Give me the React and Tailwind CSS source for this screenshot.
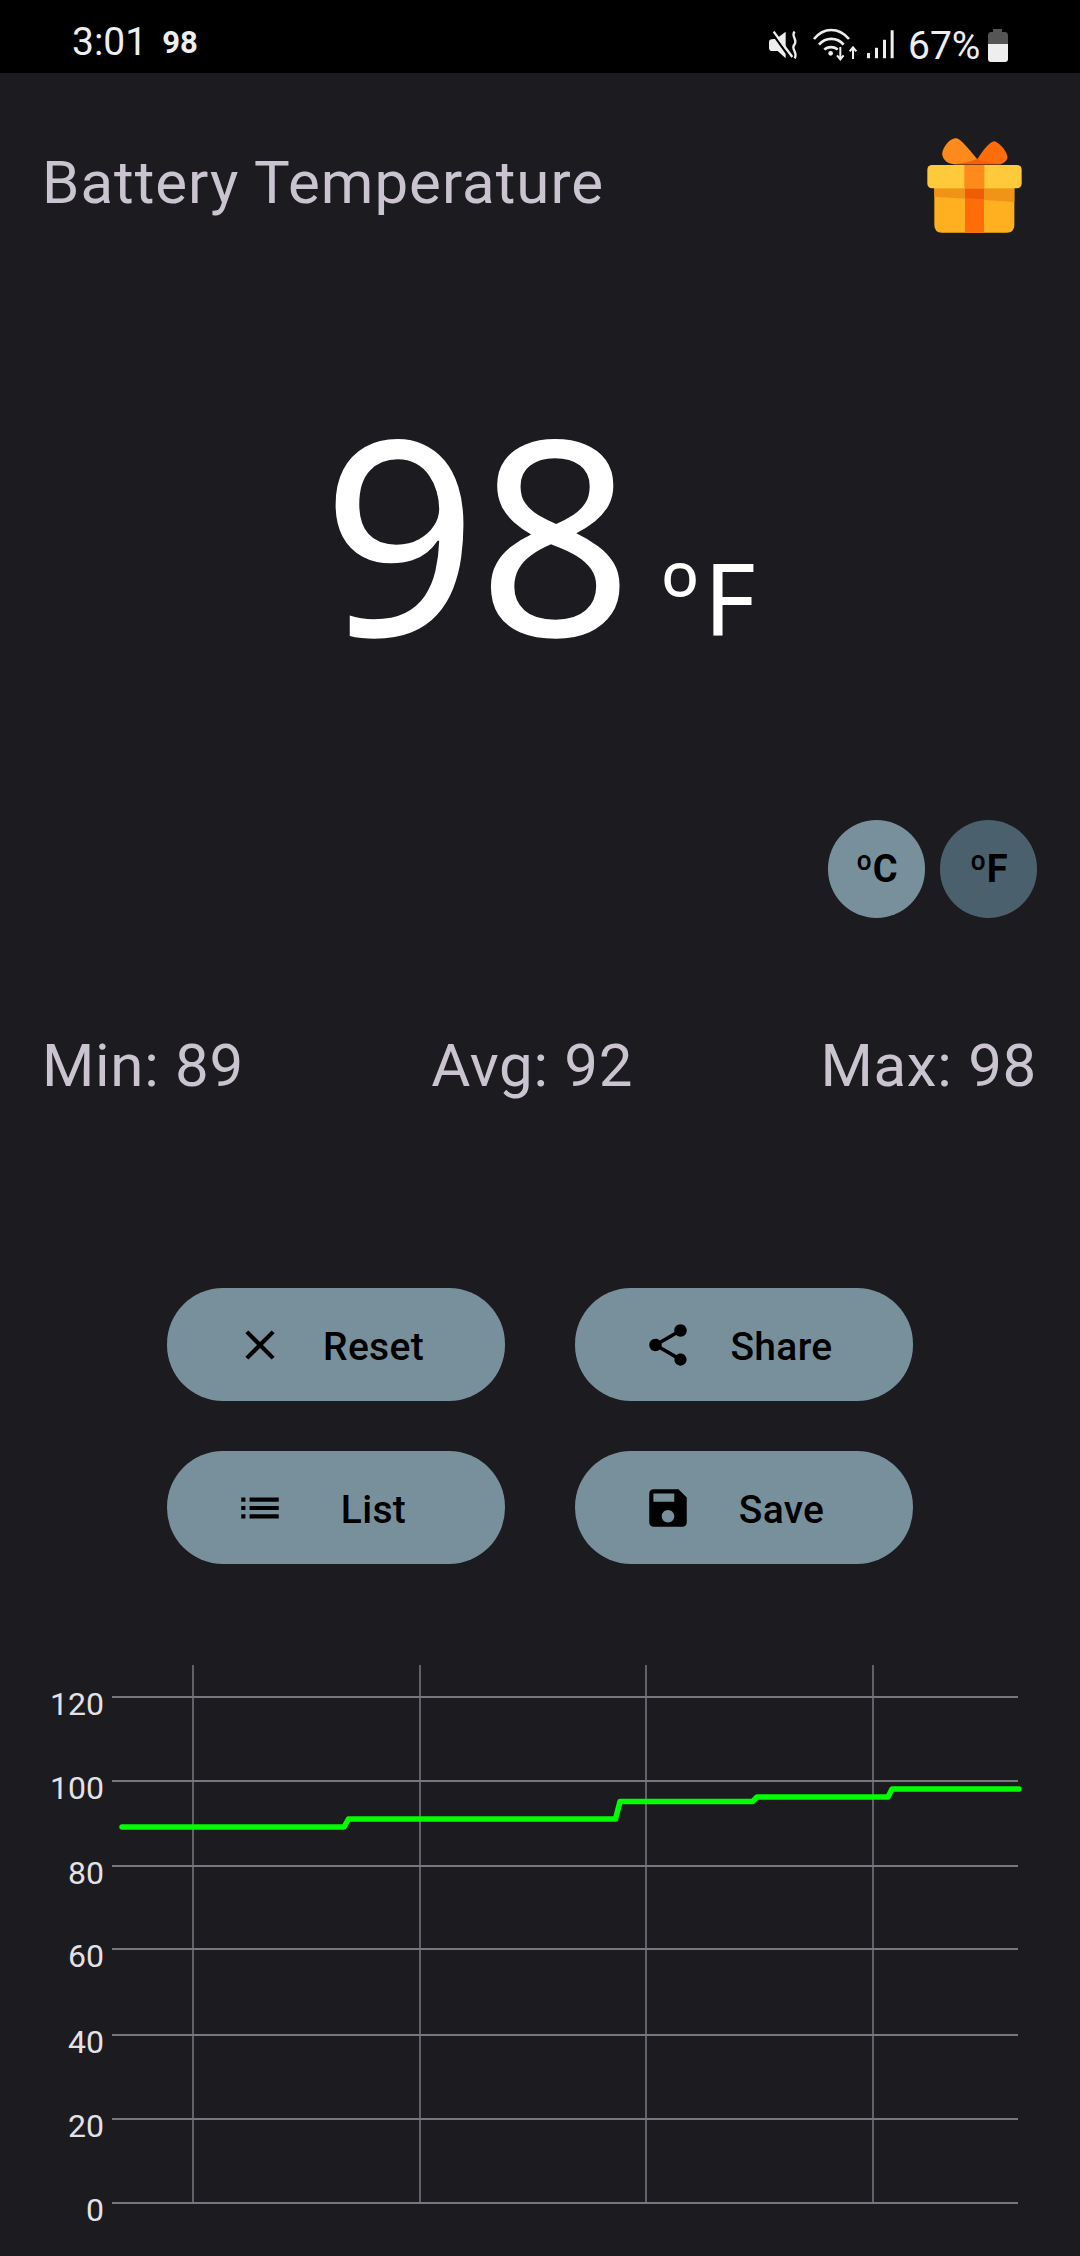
const roboto = "font-['Roboto',sans-serif]";

function SystemIcons() {
  return (
    <svg width="128.33" height="33.33" viewBox="80 55 385 100" className="absolute left-[766.7px] top-[28.3px]">
      {/* muted speaker */}
      <path d="M86 96 Q86 90 93 89 L108 87 L136 66 V146 L112 124 H96 Q86 124 86 114Z" fill="#eeeeee" />
      <path d="M92 66 L150 146" stroke="#000" strokeWidth="7" />
      <path d="M100 66 L156 142" stroke="#eeeeee" strokeWidth="7" />
      <path d="M163 66 C150 80 174 90 162 105 C150 118 174 128 163 146" stroke="#eeeeee" strokeWidth="7" fill="none" />
      {/* wifi */}
      <g stroke="#eeeeee" strokeWidth="8" fill="none">
        <path d="M221 88 C250 52 295 52 326 88" />
        <path d="M236 105 C256 82 290 82 310 105" />
        <path d="M252 120 C262 110 282 110 292 120" />
        <path d="M300 112 V148 M290 137 L300 149 L310 137" strokeWidth="6" />
        <path d="M338 148 V114 M328 125 L338 113 L348 125" strokeWidth="6" />
      </g>
      <circle cx="271" cy="131" r="7" fill="#eeeeee" />
      {/* signal */}
      <rect x="380" y="130" width="9" height="16" rx="1" fill="#eeeeee" />
      <rect x="404" y="114" width="9" height="32" rx="1" fill="#eeeeee" />
      <rect x="428" y="90" width="9" height="56" rx="1" fill="#eeeeee" />
      <rect x="451" y="62" width="9" height="84" rx="1" fill="#eeeeee" />
    </svg>
  );
}

function StatusBar() {
  return (
    <div className={`relative h-[73px] bg-black text-[#eeeeee] flex items-center pt-[12px] ${roboto}`}>
      <span className="ml-[72px] text-[39px] leading-none">3:01</span>
      <span className="ml-[15px] text-[31px] font-bold leading-none">98</span>
      <SystemIcons />
      <span className="absolute left-[908px] top-[27px] text-[39px] leading-none">67%</span>
      <svg width="22" height="33" viewBox="0 0 22 33" className="absolute left-[987px] top-[28.5px]">
        <path d="M6 0 H15 V3 H18 Q21 3 21 7 V15 H1 V7 Q1 3 4 3 H6Z" fill="#555555" />
        <path d="M1 15 H21 V30 Q21 33 18 33 H4 Q1 33 1 30Z" fill="#eeeeee" />
      </svg>
    </div>
  );
}

function GiftIcon() {
  return (
    <svg width="140" height="120" viewBox="0 0 420 360">
      <path d="M232 118 C200 80 185 60 170 55 C150 52 125 85 127 105 C130 122 145 132 165 133 L232 133Z" fill="#ff8a1c" />
      <path d="M232 118 C250 90 268 65 283 64 C300 68 325 100 322 115 C318 128 305 133 295 133 L232 133Z" fill="#ff6d0a" />
      <path d="M155 133 C185 130 215 125 232 116 C250 125 280 130 305 133Z" fill="#f55f0c" />
      <path d="M103 190 H343 V315 Q343 338 320 338 H126 Q103 338 103 315Z" fill="#ffb020" />
      <path d="M103 205 H343 V246 L103 230Z" fill="#f09418" />
      <rect x="195" y="190" width="57" height="148" fill="#ff6d0a" />
      <path d="M195 205 H252 V238 L195 234Z" fill="#ef5c06" />
      <rect x="82" y="135" width="283" height="70" rx="14" fill="#ffc93c" />
      <rect x="193" y="135" width="60" height="70" fill="#ff8a1c" />
    </svg>
  );
}

function Icon({ d }) {
  return (
    <svg width="50" height="50" viewBox="0 0 24 24" fill="#000" className="shrink-0">
      <path d={d} />
    </svg>
  );
}

function ActionButton({ d, label }) {
  return (
    <button className="w-[338px] h-[113px] rounded-[56px] bg-[#78909c] flex items-center pl-[68px] text-black">
      <Icon d={d} />
      <span className={`w-[177px] pt-[5px] text-center text-[39px] leading-none font-medium tracking-[0.3px] ${roboto}`}>{label}</span>
    </button>
  );
}

const CLOSE = "M19 6.41L17.59 5 12 10.59 6.41 5 5 6.41 10.59 12 5 17.59 6.41 19 12 13.41 17.59 19 19 17.59 13.41 12z";
const SHARE = "M18 16.08c-.76 0-1.44.3-1.96.77L8.91 12.7c.05-.23.09-.46.09-.7s-.04-.47-.09-.7l7.05-4.11c.54.5 1.25.81 2.04.81 1.66 0 3-1.34 3-3s-1.34-3-3-3-3 1.34-3 3c0 .24.04.47.09.7L8.04 9.81C7.5 9.31 6.79 9 6 9c-1.66 0-3 1.34-3 3s1.34 3 3 3c.79 0 1.5-.31 2.04-.81l7.12 4.16c-.05.21-.08.43-.08.65 0 1.61 1.31 2.92 2.92 2.92s2.92-1.31 2.92-2.92-1.31-2.92-2.92-2.92z";
const LIST = "M3 13h2v-2H3v2zm0 4h2v-2H3v2zm0-8h2V7H3v2zm4 4h14v-2H7v2zm0 4h14v-2H7v2zM7 7v2h14V7H7z";
const SAVE = "M17 3H5c-1.11 0-2 .9-2 2v14c0 1.1.89 2 2 2h14c1.1 0 2-.9 2-2V7l-4-4zm-5 16c-1.66 0-3-1.34-3-3s1.34-3 3-3 3 1.34 3 3-1.34 3-3 3zm3-10H5V5h10v4z";

const yTicks = [
  { label: "120", y: 47 },
  { label: "100", y: 131 },
  { label: "80", y: 216 },
  { label: "60", y: 299 },
  { label: "40", y: 385 },
  { label: "20", y: 469 },
  { label: "0", y: 553 },
];
const xTicks = [193, 420, 646, 873];
const linePoints = "122,177 344,177 348.5,169 615.5,169 620,151.5 752.5,151.5 757,147 888,147 892,139 1019,139";

function Chart() {
  return (
    <svg width="1080" height="606" viewBox="0 0 1080 606" className="block">
      {xTicks.map((x) => (
        <line key={x} x1={x} x2={x} y1="15" y2="553" stroke="#7b7a80" strokeWidth="1.5" />
      ))}
      {yTicks.map((t) => (
        <g key={t.label}>
          <line x1="112" x2="1018" y1={t.y} y2={t.y} stroke="#79777e" strokeWidth="2" />
          <text x="104" y={t.y + 18} textAnchor="end" fill="#e6e1e5" fontSize="32" fontFamily="Roboto, sans-serif">
            {t.label}
          </text>
        </g>
      ))}
      <polyline points={linePoints} fill="none" stroke="#00ff00" strokeWidth="5.5" strokeLinecap="round" strokeLinejoin="round" />
    </svg>
  );
}

export default function App() {
  return (
    <div className="w-[1080px] h-[2256px] overflow-hidden bg-[#1c1b1f]">
      <StatusBar />

      <div className="mt-[47px] h-[120px] flex items-center justify-between pl-[42px] pr-[40px]">
        <h1 className={`pt-[5px] text-[60px] leading-[70px] font-normal tracking-[1px] text-[#cac4d0] ${roboto}`}>Battery Temperature</h1>
        <GiftIcon />
      </div>

      <div className="mt-[147px] pl-[322px] flex items-baseline text-white h-[285px] font-['Noto_Sans',sans-serif]">
        <span className="text-[272px] leading-[288px]">98</span>
        <span className="ml-[28px] text-[100px] leading-none tracking-[5px]">ºF</span>
      </div>

      <div className={`mt-[148px] flex justify-end gap-[15px] pr-[43px] text-black text-[38px] font-bold ${roboto}`}>
        <div className="w-[97px] h-[98px] rounded-full bg-[#78909c] flex items-center justify-center">ºC</div>
        <div className="w-[97px] h-[98px] rounded-full bg-[#4a606c] flex items-center justify-center">ºF</div>
      </div>

      <div className={`mt-[113px] flex justify-between pl-[42px] pr-[43px] text-[60px] leading-[70px] tracking-[0.7px] text-[#cac4d0] ${roboto}`}>
        <span>Min: 89</span>
        <span>Avg: 92</span>
        <span>Max: 98</span>
      </div>

      <div className="mt-[187px] ml-[167px] grid grid-cols-[338px_338px] gap-x-[70px] gap-y-[50px]">
        <ActionButton d={CLOSE} label="Reset" />
        <ActionButton d={SHARE} label="Share" />
        <ActionButton d={LIST} label="List" />
        <ActionButton d={SAVE} label="Save" />
      </div>

      <div className="mt-[86px]">
        <Chart />
      </div>
    </div>
  );
}
